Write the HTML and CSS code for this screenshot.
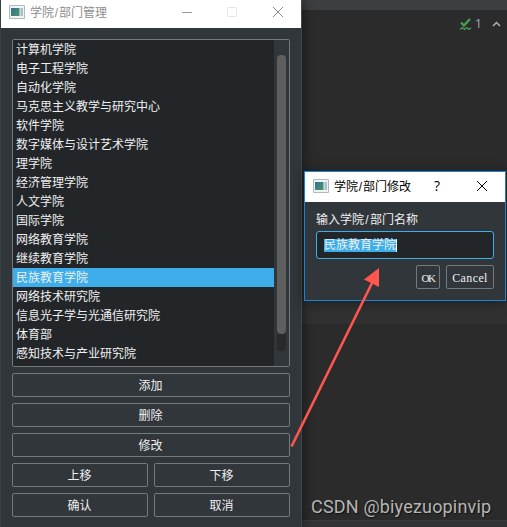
FILE: index.html
```html
<!DOCTYPE html>
<html lang="zh-CN">
<head>
<meta charset="utf-8">
<title>学院/部门管理</title>
<link rel="stylesheet" href="styles.css">
</head>
<body>
<div class="desktop">
  <div class="editor">
    <div class="toolbar"></div>
    <div class="status">
      <svg class="check" width="13" height="13" viewBox="0 0 13 13" fill="none" stroke="#499c54"><path d="M2 4.5 5 7.5 11 1" stroke-width="2.4"/><path d="M1 11.5 3.2 9.5 5.5 11.5 7.7 9.5 10 11.5 12 9.7" stroke-width="1.3"/></svg>
      <span>1</span>
      <svg class="chevron" width="9" height="6" viewBox="0 0 9 6" fill="none" stroke="#afb1b3" stroke-width="1.5"><path d="M1 5 4.5 1.5 8 5"/></svg>
    </div>
    <div class="band"></div>
    <div class="footer"></div>
  </div>

  <section class="window manager">
    <header class="titlebar">
      <svg class="app-icon" width="16" height="14" viewBox="0 0 16 14"><defs><linearGradient id="g" x2="1" y2="1"><stop stop-color="#376fa0"/><stop offset="1" stop-color="#43985c"/></linearGradient></defs><path d="M.5.5h15v13H.5z" fill="#f1f2f4" stroke="#b4b8bd"/><path d="M2 3h8v8H2z" fill="url(#g)"/><path d="M10 3h1.5v8H10z" fill="#9fb9c2"/><path d="M12 3h2v8h-2z" fill="#a9bfc9"/></svg>
      <h1>学院<i>/</i>部门管理</h1>
      <svg class="controls" width="106" height="12" viewBox="0 0 106 12" fill="none"><path d="M0 6.5h10" stroke="#999"/><path d="M45.5 1.5h9v9h-9z" stroke="#e5e5e5"/><path d="m91 1 10 10m0-10L91 11" stroke="#888"/></svg>
    </header>
    <div class="content">
      <div class="list">
        <ul>
          <li>计算机学院</li><li>电子工程学院</li><li>自动化学院</li><li>马克思主义教学与研究中心</li><li>软件学院</li><li>数字媒体与设计艺术学院</li><li>理学院</li><li>经济管理学院</li><li>人文学院</li><li>国际学院</li><li>网络教育学院</li><li>继续教育学院</li><li class="selected">民族教育学院</li><li>网络技术研究院</li><li>信息光子学与光通信研究院</li><li>体育部</li><li>感知技术与产业研究院</li>
        </ul>
        <div class="scrollbar"><div class="track"><div class="thumb"></div></div></div>
      </div>
      <div class="actions">
        <button class="wide">添加</button>
        <button class="wide">删除</button>
        <button class="wide">修改</button>
        <button>上移</button><button>下移</button>
        <button>确认</button><button>取消</button>
      </div>
    </div>
  </section>

  <section class="window dialog">
    <header class="titlebar">
      <svg class="app-icon" width="16" height="14" viewBox="0 0 16 14"><path d="M.5.5h15v13H.5z" fill="#f1f2f4" stroke="#b4b8bd"/><path d="M2 3h8v8H2z" fill="url(#g)"/><path d="M10 3h1.5v8H10z" fill="#9fb9c2"/><path d="M12 3h2v8h-2z" fill="#a9bfc9"/></svg>
      <h2>学院<i>/</i>部门修改</h2>
      <span class="help">?</span>
      <svg class="close" width="12" height="12" viewBox="0 0 12 12" stroke="#000"><path d="m1 1 10 10M11 1 1 11"/></svg>
    </header>
    <div class="form">
      <label>输入学院<i>/</i>部门名称</label>
      <div class="field"><span>民族教育学院</span></div>
      <div class="buttons"><button class="ok">OK</button><button class="cancel">Cancel</button></div>
    </div>
  </section>

  <svg class="arrow" width="507" height="527" viewBox="0 0 507 527"><path d="M291.5 446.5 373 281" stroke="#ff5650" stroke-width="2.6"/><path d="M379 268v19l-15-7.5z" fill="#ff5650"/></svg>
  <div class="watermark">CSDN @biyezuopinvip</div>
</div>
</body>
</html>
```
FILE: styles.css
```css
* { box-sizing: border-box; }
body { margin: 0; overflow: hidden; font: 12px "Liberation Sans", "Noto Sans CJK SC", sans-serif; }
.desktop { position: relative; width: 507px; height: 527px; overflow: hidden; background: #2b2b2b; }
.editor { display: flex; flex-direction: column; height: 527px; }
.toolbar { height: 10px; background: #3c3f41; }
.status { display: flex; height: 290px; padding: 8px 6px 0 0; justify-content: flex-end; align-items: flex-start; color: #8fa6b8; }
.status span { width: 7px; margin: -1px 10px 0 3px; font: 12px/14px "Noto Sans", sans-serif; }
.chevron { margin-top: 3px; }
.band { height: 24px; background: #313131; }
.footer { height: 7px; margin-top: auto; background: #313335; border-top: 1px solid #3a3c3e; }

.window { position: absolute; background: #31363b; color: #eff0f1; }
.titlebar { display: flex; align-items: center; background: #fff; }
.titlebar h1, .titlebar h2 { margin: 0; padding-top: 1px; font-size: 12px; font-weight: 400; white-space: nowrap; line-height: 18px; }
.window i { display: inline-block; width: 5px; text-align: center; font-style: normal; }
.manager { left: 0; top: 0; width: 302px; height: 527px; border-left: 1px solid #3c3f41; border-right: 1px solid #43474a; box-shadow: 2px 0 10px rgba(0, 0, 0, .4); }
.manager .titlebar { height: 28px; padding: 0 13px 4px 8px; }
.manager h1 { margin-left: 5px; color: #8d8d8d; }
.controls { margin-left: auto; margin-right: 0; }
.content { display: flex; flex-direction: column; gap: 6px; padding: 11px; }
.list { display: flex; height: 328px; border: 1px solid #76797c; border-radius: 2px; background: #232629; }
.list ul { flex: 1; margin: 0; padding: 0; list-style: none; }
.list li { height: 19px; padding-left: 3px; line-height: 21px; white-space: nowrap; }
.list .selected { background: #3daee9; }
.scrollbar { width: 15px; padding: 15px 3px; background: #31363b; }
.track { height: 296px; border-radius: 4px; background: #2a2a2a; }
.thumb { height: 279px; border-radius: 4px; background: #605f5f; }
.actions { display: grid; grid-template-columns: 1fr 1fr; gap: 6px; }
button { height: 24px; padding: 1px 0 0; border: 1px solid #76797c; border-radius: 2px; background: #31363b; color: #eff0f1; font: 12px/22px "Liberation Sans", "Noto Sans CJK SC", sans-serif; }
.actions button { padding-right: 1px; }
.wide { grid-column: span 2; }

.dialog { left: 304px; top: 171px; width: 202px; height: 130px; border: 1px solid #1883d7; box-shadow: 0 2px 12px rgba(0, 0, 0, .4); }
.dialog .titlebar { height: 30px; padding: 0 17px 2px 8px; color: #000; }
.dialog h2 { width: 78px; margin-left: 5px; }
.help { margin-left: 22px; font: 14px/18px "Open Sans", sans-serif; }
.close { margin-left: auto; }
.form { padding: 8px 11px; }
.form label { display: block; height: 21px; line-height: 20px; }
.form label i { width: 6px; }
.field { display: flex; align-items: center; height: 28px; padding-left: 7px; border: 1px solid #3daee9; border-radius: 3px; background: #232629; }
.field span { height: 13px; line-height: 13px; border-right: 1px solid #eff0f1; background: #3daee9; }
.buttons { display: flex; justify-content: flex-end; gap: 6px; margin-top: 6px; }
.buttons button { font-family: "Liberation Serif", serif; }
.buttons .ok { width: 24px; font-size: 11px; letter-spacing: -1.5px; }
.buttons .cancel { width: 48px; font-size: 12px; letter-spacing: .4px; }

.arrow { position: absolute; left: 0; top: 0; }
.watermark { position: absolute; left: 311px; top: 496px; color: #b5b5b5; font: 18px/22px Roboto, sans-serif; letter-spacing: .18px; text-shadow: 1px 1px 1px #111; white-space: nowrap; }
```
